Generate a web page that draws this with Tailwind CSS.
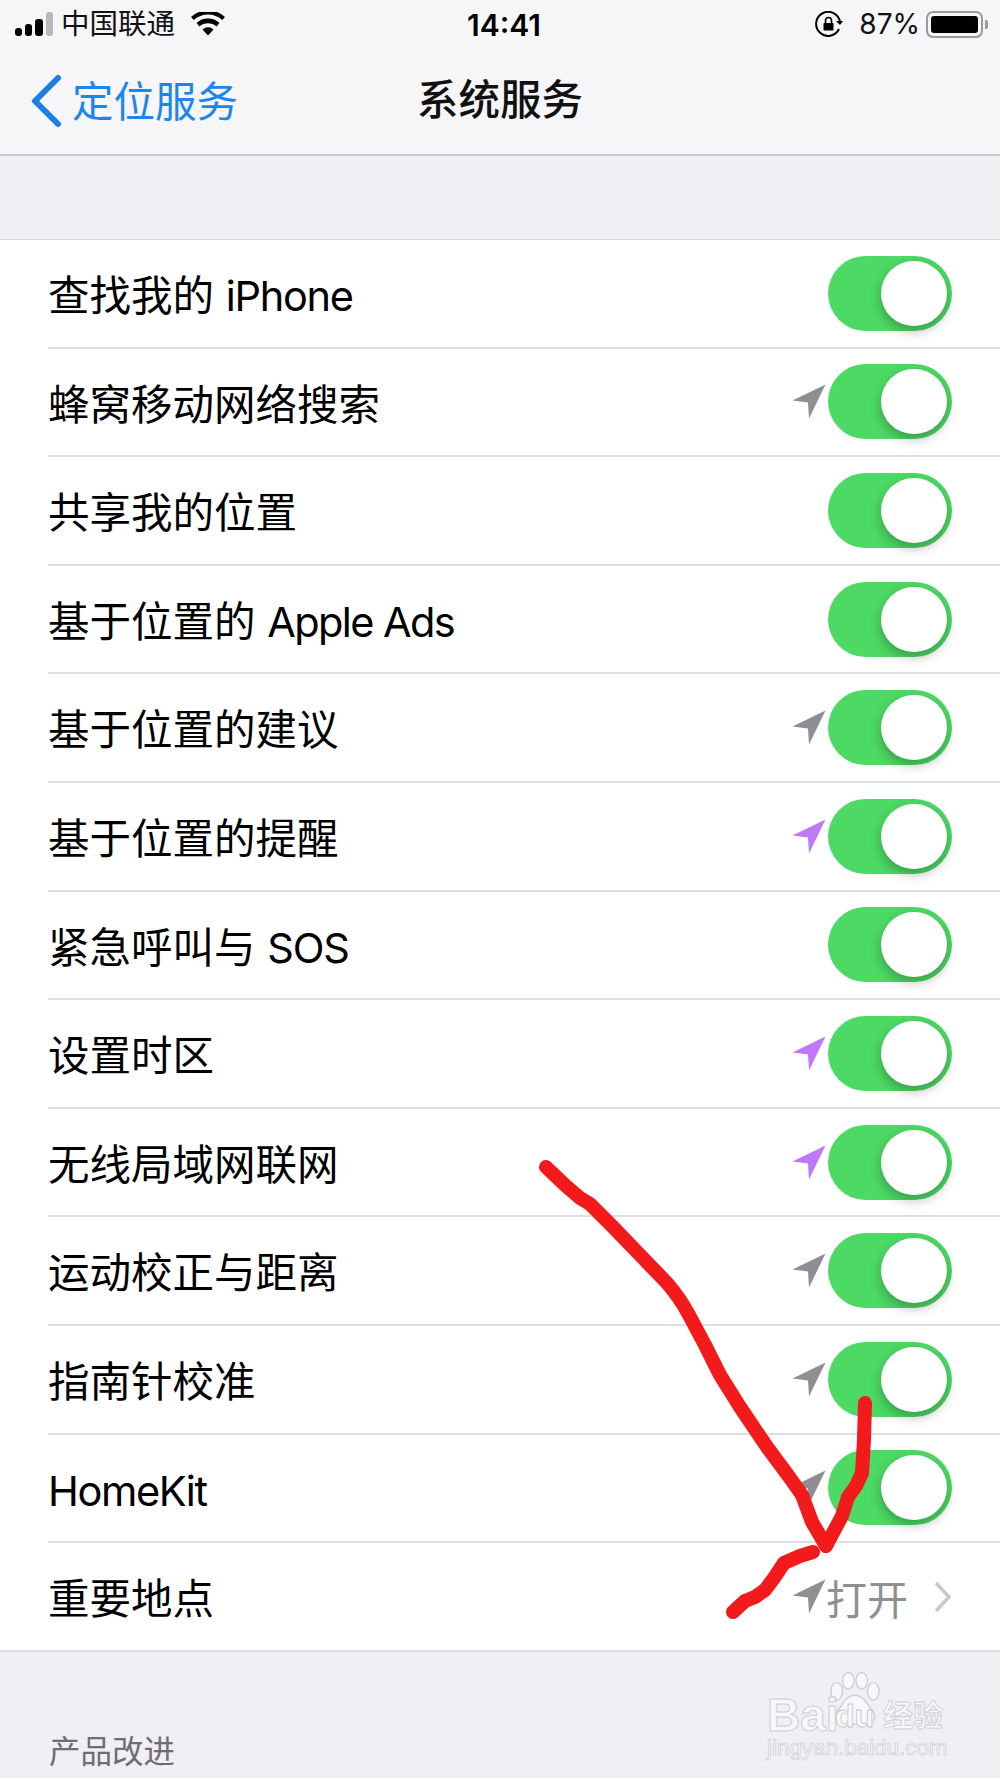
<!DOCTYPE html>
<html lang="zh">
<head>
    <meta charset="UTF-8">
    <meta name="viewport" content="width=device-width, initial-scale=1.0">
    <title>系统服务</title>
    <script src="https://cdn.jsdelivr.net/npm/@tailwindcss/browser@4"></script>
</head>
<body class="bg-[#efeff4] font-['Inter','Noto_Sans_CJK_SC',sans-serif] text-black">
<div class="relative w-[1000px] h-[1778px] overflow-hidden">
    <svg class="hidden">
        <symbol id="arrow" viewBox="0 0 34 35"><path d="M33.5 0.5L0.5 16.5L16 18.5L17 34.5Z"/></symbol>
    </svg>

    <!-- status + nav -->
    <header class="h-[156px] bg-[#f6f6f8] border-b-2 border-[#c9c9cd]">
        <div class="h-[48px] pl-[15px] pr-[12px] flex items-center relative">
            <div class="flex items-end gap-[3px] h-[24px]">
                <span class="w-[7px] h-[8px] rounded-[3px] bg-black"></span>
                <span class="w-[7px] h-[12px] rounded-[3px] bg-black"></span>
                <span class="w-[8px] h-[17px] rounded-[3px] bg-black"></span>
                <span class="w-[7px] h-[24px] rounded-[3px] bg-[#b8b8b8]"></span>
            </div>
            <span class="ml-[8px] text-[28.5px] leading-none text-[#111]">中国联通</span>
            <svg class="ml-[16px]" width="34" height="24" viewBox="0 0 34 24">
                <path d="M17 23.5L11.5 17.5A8 8 0 0 1 22.5 17.5Z"/>
                <path d="M8.5 14.5L5.5 11A17 17 0 0 1 28.5 11L25.5 14.5A13 13 0 0 0 8.5 14.5Z"/>
                <path d="M2.8 8L0 5A25 25 0 0 1 34 5L31.2 8A21 21 0 0 0 2.8 8Z"/>
            </svg>
            <span class="absolute left-[467px] top-[9px] text-[30px] leading-[32px] font-semibold">14:41</span>
            <svg class="ml-auto" width="28" height="26" viewBox="0 0 28 26" fill="none" stroke="#000" stroke-width="2">
                <path d="M24 18A12 12 0 1 1 25 11"/>
                <path d="M21 10H28L25 14Z" fill="#000" stroke="none"/>
                <rect x="8.5" y="12" width="10" height="7.5" rx="1" fill="#000" stroke="none"/>
                <path d="M10.5 12V9.5a3 3 0 0 1 6 0V12" stroke-width="1.6"/>
            </svg>
            <span class="ml-[16px] text-[28px] leading-none text-[#111]">87%</span>
            <div class="ml-[6px] w-[57px] h-[27px] rounded-[7px] border-2 border-[#9a9a9a] p-[3px]">
                <div class="h-full rounded-[3px] bg-black"></div>
            </div>
            <span class="ml-[2px] w-[3px] h-[9px] rounded-r-[2px] bg-[#9a9a9a]"></span>
        </div>
        <div class="h-[106px] flex items-center relative">
            <svg class="ml-[28px]" width="36" height="56" viewBox="0 0 36 56" fill="none" stroke="#1b7fe6" stroke-width="6" stroke-linecap="round" stroke-linejoin="round">
                <path d="M30 5L7 28L30 51"/>
            </svg>
            <span class="ml-[8px] pt-[4px] text-[41.5px] leading-none text-[#1c86ee]">定位服务</span>
            <span class="absolute left-[417px] top-[26px] text-[41.5px] leading-[52px] font-medium text-[#111]">系统服务</span>
        </div>
    </header>

    <div class="h-[83px]"></div>

    <!-- list -->
    <main class="bg-white border-t border-[#d9d9dc] border-b-2 border-b-[#dcdce0] text-[41.5px] leading-none">
        <div class="h-[108.6px] ml-[48px] pr-[48px] flex items-center border-b-2 border-[#dfdfe1]">
            <span class="mr-auto pt-[7px]">查找我的 <span class="tracking-[-1.3px]">iPhone</span></span>
            <div class="relative w-[124px] h-[75px] rounded-full bg-[#4cd964]"><div class="absolute left-[53px] top-[5px] w-[66px] h-[65px] rounded-full bg-white shadow-[0_5px_12px_rgba(0,0,0,0.28)]"></div></div>
        </div>
        <div class="h-[108.6px] ml-[48px] pr-[48px] flex items-center border-b-2 border-[#dfdfe1]">
            <span class="mr-auto pt-[7px]">蜂窝移动网络搜索</span>
            <svg class="w-[34px] h-[35px] mr-[2px] fill-[#8e8e93]"><use href="#arrow"/></svg>
            <div class="relative w-[124px] h-[75px] rounded-full bg-[#4cd964]"><div class="absolute left-[53px] top-[5px] w-[66px] h-[65px] rounded-full bg-white shadow-[0_5px_12px_rgba(0,0,0,0.28)]"></div></div>
        </div>
        <div class="h-[108.6px] ml-[48px] pr-[48px] flex items-center border-b-2 border-[#dfdfe1]">
            <span class="mr-auto pt-[7px]">共享我的位置</span>
            <div class="relative w-[124px] h-[75px] rounded-full bg-[#4cd964]"><div class="absolute left-[53px] top-[5px] w-[66px] h-[65px] rounded-full bg-white shadow-[0_5px_12px_rgba(0,0,0,0.28)]"></div></div>
        </div>
        <div class="h-[108.6px] ml-[48px] pr-[48px] flex items-center border-b-2 border-[#dfdfe1]">
            <span class="mr-auto pt-[7px]">基于位置的 <span class="tracking-[-1.6px]">Apple Ads</span></span>
            <div class="relative w-[124px] h-[75px] rounded-full bg-[#4cd964]"><div class="absolute left-[53px] top-[5px] w-[66px] h-[65px] rounded-full bg-white shadow-[0_5px_12px_rgba(0,0,0,0.28)]"></div></div>
        </div>
        <div class="h-[108.6px] ml-[48px] pr-[48px] flex items-center border-b-2 border-[#dfdfe1]">
            <span class="mr-auto pt-[7px]">基于位置的建议</span>
            <svg class="w-[34px] h-[35px] mr-[2px] fill-[#8e8e93]"><use href="#arrow"/></svg>
            <div class="relative w-[124px] h-[75px] rounded-full bg-[#4cd964]"><div class="absolute left-[53px] top-[5px] w-[66px] h-[65px] rounded-full bg-white shadow-[0_5px_12px_rgba(0,0,0,0.28)]"></div></div>
        </div>
        <div class="h-[108.6px] ml-[48px] pr-[48px] flex items-center border-b-2 border-[#dfdfe1]">
            <span class="mr-auto pt-[7px]">基于位置的提醒</span>
            <svg class="w-[34px] h-[35px] mr-[2px] fill-[#bf78f8]"><use href="#arrow"/></svg>
            <div class="relative w-[124px] h-[75px] rounded-full bg-[#4cd964]"><div class="absolute left-[53px] top-[5px] w-[66px] h-[65px] rounded-full bg-white shadow-[0_5px_12px_rgba(0,0,0,0.28)]"></div></div>
        </div>
        <div class="h-[108.6px] ml-[48px] pr-[48px] flex items-center border-b-2 border-[#dfdfe1]">
            <span class="mr-auto pt-[7px]">紧急呼叫与 <span class="tracking-[-1.1px]">SOS</span></span>
            <div class="relative w-[124px] h-[75px] rounded-full bg-[#4cd964]"><div class="absolute left-[53px] top-[5px] w-[66px] h-[65px] rounded-full bg-white shadow-[0_5px_12px_rgba(0,0,0,0.28)]"></div></div>
        </div>
        <div class="h-[108.6px] ml-[48px] pr-[48px] flex items-center border-b-2 border-[#dfdfe1]">
            <span class="mr-auto pt-[7px]">设置时区</span>
            <svg class="w-[34px] h-[35px] mr-[2px] fill-[#bf78f8]"><use href="#arrow"/></svg>
            <div class="relative w-[124px] h-[75px] rounded-full bg-[#4cd964]"><div class="absolute left-[53px] top-[5px] w-[66px] h-[65px] rounded-full bg-white shadow-[0_5px_12px_rgba(0,0,0,0.28)]"></div></div>
        </div>
        <div class="h-[108.6px] ml-[48px] pr-[48px] flex items-center border-b-2 border-[#dfdfe1]">
            <span class="mr-auto pt-[7px]">无线局域网联网</span>
            <svg class="w-[34px] h-[35px] mr-[2px] fill-[#bf78f8]"><use href="#arrow"/></svg>
            <div class="relative w-[124px] h-[75px] rounded-full bg-[#4cd964]"><div class="absolute left-[53px] top-[5px] w-[66px] h-[65px] rounded-full bg-white shadow-[0_5px_12px_rgba(0,0,0,0.28)]"></div></div>
        </div>
        <div class="h-[108.6px] ml-[48px] pr-[48px] flex items-center border-b-2 border-[#dfdfe1]">
            <span class="mr-auto pt-[7px]">运动校正与距离</span>
            <svg class="w-[34px] h-[35px] mr-[2px] fill-[#8e8e93]"><use href="#arrow"/></svg>
            <div class="relative w-[124px] h-[75px] rounded-full bg-[#4cd964]"><div class="absolute left-[53px] top-[5px] w-[66px] h-[65px] rounded-full bg-white shadow-[0_5px_12px_rgba(0,0,0,0.28)]"></div></div>
        </div>
        <div class="h-[108.6px] ml-[48px] pr-[48px] flex items-center border-b-2 border-[#dfdfe1]">
            <span class="mr-auto pt-[7px]">指南针校准</span>
            <svg class="w-[34px] h-[35px] mr-[2px] fill-[#8e8e93]"><use href="#arrow"/></svg>
            <div class="relative w-[124px] h-[75px] rounded-full bg-[#4cd964]"><div class="absolute left-[53px] top-[5px] w-[66px] h-[65px] rounded-full bg-white shadow-[0_5px_12px_rgba(0,0,0,0.28)]"></div></div>
        </div>
        <div class="h-[108.6px] ml-[48px] pr-[48px] flex items-center border-b-2 border-[#dfdfe1]">
            <span class="mr-auto pt-[7px] tracking-[-1.4px]">HomeKit</span>
            <svg class="w-[34px] h-[35px] mr-[2px] fill-[#8e8e93]"><use href="#arrow"/></svg>
            <div class="relative w-[124px] h-[75px] rounded-full bg-[#4cd964]"><div class="absolute left-[53px] top-[5px] w-[66px] h-[65px] rounded-full bg-white shadow-[0_5px_12px_rgba(0,0,0,0.28)]"></div></div>
        </div>
        <div class="h-[107px] ml-[48px] pr-[48px] flex items-center">
            <span class="mr-auto pt-[7px]">重要地点</span>
            <svg class="w-[34px] h-[35px] fill-[#8e8e93]"><use href="#arrow"/></svg>
            <span class="pt-[7px] text-[41px] text-[#8e8e93]">打开</span>
            <svg class="ml-[26px]" width="18" height="32" viewBox="0 0 18 32" fill="none" stroke="#c7c7cc" stroke-width="3.5">
                <path d="M2 2L15 16L2 30"/>
            </svg>
        </div>
    </main>

    <p class="pl-[49px] pt-[82px] text-[31.5px] leading-[36px] text-[#6d6d72]">产品改进</p>

    <!-- baidu watermark -->
    <div class="absolute left-[766px] top-[1670px] w-[180px]">
        <svg class="absolute left-[62px] top-[1px]" width="54" height="58" viewBox="0 0 56 58" fill="#f8f8fa" stroke="#cfcfd3" stroke-width="1.5">
            <ellipse cx="9" cy="20" rx="6" ry="9"/>
            <ellipse cx="21" cy="9" rx="6" ry="8.5"/>
            <ellipse cx="35" cy="9" rx="6" ry="8.5"/>
            <ellipse cx="47" cy="20" rx="6" ry="9"/>
            <path d="M28 24C38 24 40 34 46 40C52 48 46 56 38 55C33 54 23 54 18 55C10 56 4 48 10 40C16 34 18 24 28 24Z"/>
        </svg>
        <span class="absolute left-[1px] top-[25px] font-['Liberation_Sans',sans-serif] text-[46px] leading-[40px] font-bold text-[#f7f7f9] [-webkit-text-stroke:1px_#cdcdd1]">Bai</span>
        <span class="absolute left-[69px] top-[30px] font-['Liberation_Sans',sans-serif] text-[32px] leading-[32px] font-bold text-[#f8f8fa] [-webkit-text-stroke:0.8px_#c4c4c8]">du</span>
        <span class="absolute left-[117px] top-[26px] font-['Noto_Sans_CJK_SC',sans-serif] text-[30px] leading-[34px] font-bold text-[#f7f7f9] [-webkit-text-stroke:0.8px_#cdcdd1]">经验</span>
        <p class="absolute left-[1px] top-[66px] whitespace-nowrap text-[22.4px] leading-[24px] font-['Liberation_Sans',sans-serif] text-[#f6f6f8] [-webkit-text-stroke:0.7px_#cdcdd1]">jingyan.baidu.com</p>
    </div>

    <!-- red scribble on top of the screenshot -->
    <svg class="absolute left-0 top-0 pointer-events-none" width="1000" height="1778" fill="none" stroke="#f21a1a" stroke-width="14" stroke-linecap="round" stroke-linejoin="round">
        <path d="M546 1167L566 1186L580 1198L590 1204L613 1227L640 1255L667 1283Q680 1298 689 1315L705 1345L720 1375L740 1407L767 1447L790 1478L802 1495L812 1522L826 1546"/>
        <path d="M865 1403L864 1440L862 1473L856 1486L848 1497L842 1516L826 1546"/>
        <path d="M813 1552L800 1556L784 1563L774 1578L765 1590L755 1597L745 1601L733 1612"/>
    </svg>
</div>
</body>
</html>
